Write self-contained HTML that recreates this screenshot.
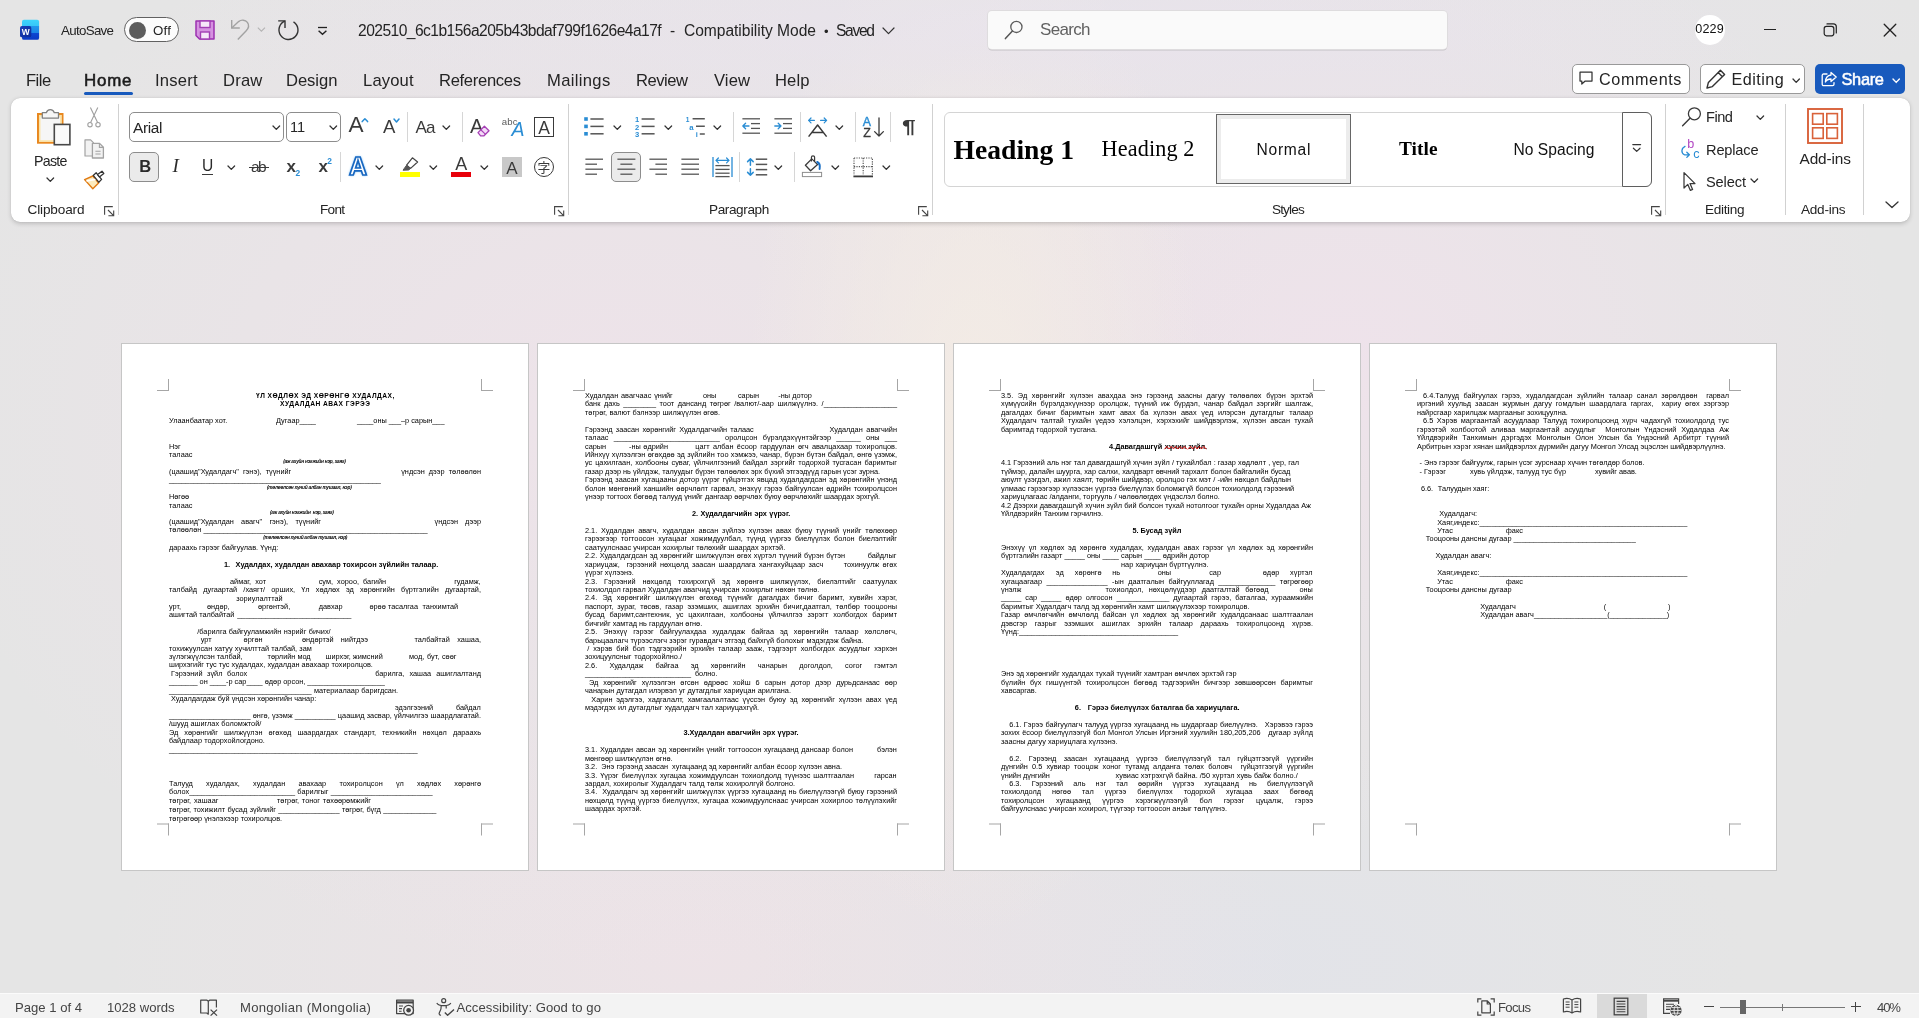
<!DOCTYPE html><html lang="mn"><head><meta charset="utf-8"><title>Word</title><style>
html,body{margin:0;padding:0}
body{width:1919px;height:1018px;position:relative;overflow:hidden;background:#e6e5e6;font-family:"Liberation Sans",sans-serif}
#bg{position:absolute;left:0;top:0;width:1919px;height:1018px;
background:
 radial-gradient(ellipse 900px 110px at 1050px 30px, rgba(233,227,238,.7), rgba(233,227,238,0) 100%),
 radial-gradient(ellipse 230px 520px at 975px 420px, rgba(244,237,228,.9), rgba(244,237,228,0) 100%),
 radial-gradient(ellipse 700px 560px at 620px 420px, rgba(241,226,235,.75), rgba(241,226,235,0) 100%),
 radial-gradient(ellipse 560px 480px at 1340px 360px, rgba(241,226,236,.8), rgba(241,226,236,0) 100%),
 radial-gradient(ellipse 600px 300px at 700px 960px, rgba(240,226,232,.7), rgba(240,226,232,0) 100%),
 radial-gradient(ellipse 500px 220px at 1250px 960px, rgba(224,226,236,.55), rgba(224,226,236,0) 100%),
 #e5e5e5}

.pg{will-change:transform;position:absolute;width:408px;height:528px;background:#fff;box-shadow:inset 0 0 0 1px #c6c6c6;overflow:hidden}
.pc{position:absolute;left:0;top:0;width:816px;height:1056px;transform:scale(.5);transform-origin:0 0;font-family:"Liberation Sans",sans-serif;font-size:14.667px;line-height:16.85px;color:#000}
.s{position:absolute;white-space:pre;display:block}
.j{text-align:justify;text-align-last:justify}
.b{font-weight:bold}
.sm{font-weight:bold;font-style:italic}
.wavy{text-decoration:underline wavy #e8231a 1.6px;text-underline-offset:1px}
.cm{position:absolute;width:22px;height:22px;border:0 solid #a6a6a6}
.cm.tl{left:72px;top:72px;border-right-width:2px;border-bottom-width:2px}
.cm.tr{left:720px;top:72px;border-left-width:2px;border-bottom-width:2px}
.cm.bl{left:72px;top:960.5px;border-right-width:2px;border-top-width:2px}
.cm.br{left:720px;top:960.5px;border-left-width:2px;border-top-width:2px}

.a{position:absolute;display:block;overflow:visible}
.t{position:absolute;white-space:pre;display:block}
#chrome{position:absolute;left:0;top:0;width:1919px;height:1018px;will-change:transform}
</style></head><body><div id="bg"></div><div class="pg" style="left:121px;top:343px"><div class="pc"><i class="cm tl"></i><i class="cm tr"></i><i class="cm bl"></i><i class="cm br"></i><span class="s b ls" style="left:270.0px;top:97.3px;letter-spacing:0.897px;font-size:13.33px;line-height:15.32px;">ҮЛ ХӨДЛӨХ ЭД ХӨРӨНГӨ ХУДАЛДАХ,</span><span class="s b ls" style="left:318.0px;top:113.3px;letter-spacing:0.937px;font-size:13.33px;line-height:15.32px;">ХУДАЛДАН АВАХ ГЭРЭЭ</span><span class="s" style="left:96.0px;top:146.7px;">Улаанбаатар хот.</span><span class="s" style="left:310.0px;top:146.7px;">Дугаар____</span><span class="s" style="left:472.0px;top:146.7px;">____оны ___–р сарын___</span><span class="s" style="left:96.0px;top:197.5px;">Нэг</span><span class="s" style="left:96.0px;top:214.3px;">талаас</span><span class="s sm ls" style="left:324.4px;top:231.0px;letter-spacing:-0.493px;font-size:9.60px;line-height:11.03px;">(аж ахуйн нэгжийн нэр, хаяг)</span><span class="s j" style="left:96.0px;top:248.5px;width:241.0px;">(цаашид"Худалдагч"  гэнэ),  түүнийг</span><span class="s" style="right:96.0px;top:248.5px;">үндсэн  дээр  төлөөлөн</span><span class="s" style="left:96.0px;top:265.3px;">____________________________________________________</span><span class="s sm ls" style="left:292.0px;top:283.4px;letter-spacing:-0.517px;font-size:9.60px;line-height:11.03px;">(төлөөлсөн хүний албан тушаал, нэр)</span><span class="s" style="left:96.0px;top:297.9px;">Нөгөө</span><span class="s" style="left:96.0px;top:315.7px;">талаас</span><span class="s sm ls" style="left:298.0px;top:333.0px;letter-spacing:-0.485px;font-size:9.60px;line-height:11.03px;">(аж ахуйн нэгжийн  нэр, хаяг)</span><span class="s j" style="left:96.0px;top:348.1px;width:304.0px;">(цаашид"Худалдан авагч" гэнэ), түүнийг</span><span class="s j" style="left:627.0px;top:348.1px;width:93.0px;">үндсэн дээр</span><span class="s" style="left:96.0px;top:364.1px;">төлөөлөн</span><span class="s" style="left:164.8px;top:364.1px;">_______________________________________________________</span><span class="s sm ls" style="left:284.4px;top:382.8px;letter-spacing:-0.546px;font-size:9.60px;line-height:11.03px;">(төлөөлсөн хүний албан тушаал, нэр)</span><span class="s" style="left:96.0px;top:400.5px;">дараахь гэрээг байгуулав. Үүнд:</span><span class="s b" style="left:205.8px;top:433.9px;">1.</span><span class="s j b" style="left:229.2px;top:433.9px;width:405.2px;">Худалдах, худалдан авахаар тохирсон зүйлийн талаар.</span><span class="s j" style="left:218.0px;top:467.5px;width:72.0px;">аймаг,  хот</span><span class="s j" style="left:395.4px;top:467.5px;width:133.8px;">сум,  хороо,  багийн</span><span class="s j" style="left:666.4px;top:467.5px;width:53.6px;">гудамж,</span><span class="s j" style="left:96.0px;top:484.3px;width:624.0px;">талбайд дугаартай /хаягт/ орших, Үл хөдлөх эд хөрөнгийн бүртгэлийн дугаартай,</span><span class="s" style="left:230.4px;top:501.7px;">зориулалттай</span><span class="s" style="left:96.0px;top:518.1px;">урт,</span><span class="s" style="left:172.0px;top:518.1px;">өндөр,</span><span class="s" style="left:274.0px;top:518.1px;">өргөнтэй,</span><span class="s" style="left:395.4px;top:518.1px;">давхар</span><span class="s j" style="left:496.8px;top:518.1px;width:177.6px;">өрөө тасалгаа  танхимтай</span><span class="s" style="left:96.0px;top:534.5px;">ашигтай талбайтай</span><span class="s" style="left:232.6px;top:534.5px;">____________________________</span><span class="s j" style="left:152.6px;top:567.7px;width:266.6px;">/барилга байгууламжийн нэрийг бичих/</span><span class="s" style="left:159.4px;top:584.9px;">урт</span><span class="s" style="left:245.2px;top:584.9px;">өргөн</span><span class="s j" style="left:362.0px;top:584.9px;width:132.0px;">өндөртэй  нийтдээ</span><span class="s j" style="left:587.0px;top:584.9px;width:133.0px;">талбайтай  хашаа,</span><span class="s j" style="left:96.0px;top:601.7px;width:285.6px;">тохижуулсан хатуу хучилттай талбай, зам</span><span class="s" style="left:96.0px;top:618.1px;">зүлэгжүүлсэн талбай,</span><span class="s" style="left:293.2px;top:618.1px;">төрлийн мод</span><span class="s" style="left:409.2px;top:618.1px;">ширхэг, жимсний</span><span class="s j" style="left:576.0px;top:618.1px;width:94.8px;">мод, бут, сөөг</span><span class="s j" style="left:96.0px;top:634.5px;width:407.8px;">ширхэгийг тус тус худалдах, худалдан авахаар тохиролцов.</span><span class="s j" style="left:100.0px;top:651.7px;width:152.4px;">Гэрээний  зүйл  болох</span><span class="s j" style="left:508.4px;top:651.7px;width:211.6px;">барилга,  хашаа  ашиглалтанд</span><span class="s j" style="left:96.0px;top:668.5px;width:431.4px;">_______ он ____-р сар____ өдөр орсон, ___________________</span><span class="s j" style="left:96.0px;top:685.7px;width:458.0px;">___________________________________ материалаар баригдсан.</span><span class="s j" style="left:100.0px;top:702.9px;width:290.6px;">Худалдагдаж буй үндсэн хөрөнгийн чанар:</span><span class="s" style="left:548.0px;top:719.5px;">эдэлгээний</span><span class="s j" style="left:670.0px;top:719.5px;width:50.0px;">байдал</span><span class="s j" style="left:96.0px;top:736.1px;width:624.0px;">____________________ өнгө, үзэмж __________ цаашид засвар, үйлчилгээ шаардлагатай.</span><span class="s j" style="left:96.0px;top:752.9px;width:184.6px;">/шууд ашиглах боломжтой/</span><span class="s j" style="left:96.0px;top:769.7px;width:624.0px;">Эд хөрөнгийг шилжүүлэн өгөхөд шаардагдах стандарт, техникийн нөхцөл дараахь</span><span class="s j" style="left:96.0px;top:786.5px;width:191.8px;">байдлаар тодорхойлогдоно.</span><span class="s" style="left:96.0px;top:804.5px;">_____________________________________________________________</span><span class="s j" style="left:96.0px;top:872.1px;width:624.0px;">Талууд худалдах, худалдан авахаар тохиролцсон үл хөдлөх хөрөнгө</span><span class="s j" style="left:96.0px;top:889.3px;width:527.4px;">болох__________________________ барилгыг _________________________</span><span class="s j" style="left:96.0px;top:906.9px;width:98.8px;">төгрөг, хашааг</span><span class="s j" style="left:312.0px;top:906.9px;width:188.0px;">төгрөг, тоног төхөөрөмжийг</span><span class="s j" style="left:96.0px;top:923.7px;width:534.6px;">төгрөг, тохижилт бусад зүйлийг _______________ төгрөг, бүгд _____________</span><span class="s j" style="left:96.0px;top:941.7px;width:225.4px;">төгрөгөөр үнэлэхээр тохиролцов.</span></div></div><div class="pg" style="left:537px;top:343px"><div class="pc"><i class="cm tl"></i><i class="cm tr"></i><i class="cm bl"></i><i class="cm br"></i><span class="s j" style="left:96.0px;top:96.5px;width:175.5px;">Худалдан авагчаас үнийг</span><span class="s" style="left:331.8px;top:96.5px;">оны</span><span class="s" style="left:401.9px;top:96.5px;">сарын</span><span class="s j" style="left:482.4px;top:96.5px;width:67.3px;">-ны дотор</span><span class="s j" style="left:96.0px;top:113.4px;width:624.0px;">банк дахь ________ тоот дансанд төгрөг /валют/-аар шилжүүлнэ. /__________________</span><span class="s j" style="left:96.0px;top:130.2px;width:270.1px;">төгрөг, валют бэлнээр шилжүүлэн өгөв.</span><span class="s j" style="left:96.0px;top:164.0px;width:337.5px;">Гэрээнд заасан хөрөнгийг Худалдагчийн талаас</span><span class="s j" style="left:585.1px;top:164.0px;width:134.9px;">Худалдан авагчийн</span><span class="s j" style="left:96.0px;top:180.8px;width:624.0px;">талаас __________________________ оролцсон бүрэлдэхүүнтэйгээр ______ оны ___</span><span class="s" style="left:96.0px;top:197.7px;">сарын</span><span class="s j" style="left:184.0px;top:197.7px;width:78.0px;">-ны өдрийн</span><span class="s j" style="left:316.5px;top:197.7px;width:403.5px;">цагт албан ёсоор гардуулан өгч авалцахаар тохиролцов.</span><span class="s j" style="left:96.0px;top:214.6px;width:624.0px;">Ийнхүү хүлээлгэн өгөхдөө эд зүйлийн тоо хэмжээ, чанар, бүрэн бүтэн байдал, өнгө үзэмж,</span><span class="s j" style="left:96.0px;top:231.4px;width:624.0px;">ус цахилгаан, холбооны суваг, үйлчилгээний байдал зэргийг тодорхой тусгасан баримтыг</span><span class="s j" style="left:96.0px;top:248.3px;width:590.1px;">газар дээр нь үйлдэж, талуудыг бүрэн төлөөлөх эрх бүхий этгээдүүд гарын үсэг зурна.</span><span class="s j" style="left:96.0px;top:265.2px;width:624.0px;">Гэрээнд заасан хугацааны дотор үүрэг гүйцэтгэх явцад худалдагдсан эд хөрөнгийн үнэнд</span><span class="s j" style="left:96.0px;top:282.0px;width:624.0px;">болон мөнгөний ханшийн өөрчлөлт гарвал, энэхүү гэрээ байгуулсан өдрийн тохиролцсон</span><span class="s j" style="left:96.0px;top:298.9px;width:590.1px;">үнээр тогтоох бөгөөд талууд үнийг дангаар өөрчлөх буюу өөрчлөхийг шаардах эрхгүй.</span><span class="s j b" style="left:309.8px;top:332.6px;width:196.7px;">2. Худалдагчийн эрх үүрэг.</span><span class="s j" style="left:96.0px;top:366.3px;width:624.0px;">2.1. Худалдан авагч, худалдан авсан зүйлээ хүлээн авах буюу түүний үнийг төлөхөөр</span><span class="s j" style="left:96.0px;top:383.2px;width:624.0px;">гэрээгээр тогтоосон хугацааг хожимдуулбал, түүнд үүргээ биелүүлэх болон биелэлтийг</span><span class="s j" style="left:96.0px;top:400.1px;width:400.5px;">саатуулснаас учирсан хохирлыг төлөхийг шаардах эрхтэй.</span><span class="s j" style="left:96.0px;top:416.9px;width:520.3px;">2.2. Худалдагдсан эд хөрөнгийг шилжүүлэн өгөх хүртэл түүний бүрэн бүтэн</span><span class="s j" style="left:661.3px;top:416.9px;width:58.7px;">байдлыг</span><span class="s j" style="left:96.0px;top:433.8px;width:476.7px;">хариуцаж,  гэрээний нөхцөлд заасан шаардлага хангахуйцаар засч</span><span class="s j" style="left:613.5px;top:433.8px;width:106.5px;">тохинуулж өгөх</span><span class="s j" style="left:96.0px;top:450.7px;width:95.8px;">үүрэг хүлээнэ.</span><span class="s j" style="left:96.0px;top:467.5px;width:624.0px;">2.3. Гэрээний нөхцөлд тохирохгүй эд хөрөнгө шилжүүлэх, биелэлтийг саатуулах</span><span class="s j" style="left:96.0px;top:484.4px;width:468.6px;">тохиолдол гарвал Худалдан авагчид учирсан хохирлыг нөхөн төлнө.</span><span class="s j" style="left:96.0px;top:501.3px;width:624.0px;">2.4. Эд хөрөнгийг шилжүүлэн өгөхөд түүнийг дагалдах бичиг баримт, хувийн хэрэг,</span><span class="s j" style="left:96.0px;top:518.1px;width:624.0px;">паспорт, зураг, төсөв, газар эзэмших, ашиглах эрхийн бичиг,даатгал, төлбөр тооцооны</span><span class="s j" style="left:96.0px;top:535.0px;width:624.0px;">бусад баримт,сантехник, ус цахилгаан, холбооны үйлчилгээ зэрэгт холбогдох баримт</span><span class="s j" style="left:96.0px;top:551.9px;width:234.0px;">бичгийг хамтад нь гардуулан өгнө.</span><span class="s j" style="left:96.0px;top:568.7px;width:624.0px;">2.5. Энэхүү гэрээг байгуулахдаа худалдаж байгаа эд хөрөнгийн талаар хөлслөгч,</span><span class="s j" style="left:96.0px;top:585.6px;width:556.5px;">барьцаалагч түрээслэгч зэрэг гуравдагч этгээд байхгүй болохыг мэдэгдэж байна.</span><span class="s j" style="left:100.4px;top:602.5px;width:619.6px;">/ хэрэв бий бол тэдгээрийн эрхийн талаар зааж, тэдгээрт холбогдох асуудлыг хэрхэн</span><span class="s j" style="left:96.0px;top:619.3px;width:194.0px;">зохицуулсныг тодорхойлно./</span><span class="s j" style="left:96.0px;top:636.2px;width:624.0px;">2.6. Худалдаж байгаа эд хөрөнгийн чанарын доголдол, согог гэмтэл</span><span class="s" style="left:96.0px;top:653.1px;">__________________________</span><span class="s" style="left:315.8px;top:653.1px;">болно.</span><span class="s j" style="left:103.9px;top:669.9px;width:616.1px;">Эд хөрөнгийг хүлээлгэн өгсөн өдрөөс хойш 6 сарын дотор дээр дурьдсанаас өөр</span><span class="s j" style="left:96.0px;top:686.8px;width:411.9px;">чанарын дутагдал илэрвэл уг дутагдлыг хариуцан арилгана.</span><span class="s j" style="left:108.5px;top:703.7px;width:611.5px;">Харин эдэлгээ, хадгалалт, хамгаалалтаас үүссэн буюу эд хөрөнгийг хүлээн авах үед</span><span class="s j" style="left:96.0px;top:720.5px;width:348.1px;">мэдэгдэх ил дутагдлыг худалдагч тал хариуцахгүй.</span><span class="s j b" style="left:292.8px;top:771.1px;width:230.3px;">3.Худалдан авагчийн эрх үүрэг.</span><span class="s j" style="left:96.0px;top:804.9px;width:535.9px;">3.1. Худалдан авсан эд хөрөнгийн үнийг тогтоосон хугацаанд дансаар болон</span><span class="s j" style="left:680.1px;top:804.9px;width:39.9px;">бэлэн</span><span class="s j" style="left:96.0px;top:821.7px;width:174.5px;">мөнгөөр шилжүүлэн өгнө.</span><span class="s j" style="left:96.0px;top:838.6px;width:513.9px;">3.2.  Энэ гэрээнд заасан  хугацаанд эд хөрөнгийг албан ёсоор хүлээн авна.</span><span class="s j" style="left:96.0px;top:855.5px;width:538.0px;">3.3. Үүрэг биелүүлэх хугацаа хожимдуулсан тохиолдолд түүнээс шалтгаалан</span><span class="s j" style="left:674.4px;top:855.5px;width:45.6px;">гарсан</span><span class="s j" style="left:96.0px;top:872.3px;width:420.0px;">зардал, хохиролыг Худалдагч талд төлж хохиролгүй болгоно.</span><span class="s j" style="left:96.0px;top:889.2px;width:624.0px;">3.4.  Худалдагч эд хөрөнгийг шилжүүлэх үүргээ хугацаанд нь биелүүлээгүй буюу гэрээний</span><span class="s j" style="left:96.0px;top:906.1px;width:624.0px;">нөхцөлд түүнд үүргээ биелүүлэх, хугацаа хожимдуулснаас учирсан хохирлоо төлүүлэхийг</span><span class="s j" style="left:96.0px;top:922.9px;width:111.7px;">шаардах эрхтэй.</span></div></div><div class="pg" style="left:953px;top:343px"><div class="pc"><i class="cm tl"></i><i class="cm tr"></i><i class="cm bl"></i><i class="cm br"></i><span class="s j" style="left:96.0px;top:96.5px;width:624.0px;">3.5. Эд хөрөнгийг хүлээн авахдаа энэ гэрээнд заасны дагуу төлөөлөх бүрэн эрхтэй</span><span class="s j" style="left:96.0px;top:113.4px;width:624.0px;">хүмүүсийн бүрэлдэхүүнээр оролцож, түүний иж бүрдэл, чанар байдал зэргийг шалгаж,</span><span class="s j" style="left:96.0px;top:130.2px;width:624.0px;">дагалдах бичиг баримтын хамт авах ба хүлээн авах үед илэрсэн дутагдлыг талаар</span><span class="s j" style="left:96.0px;top:147.1px;width:624.0px;">Худалдагч талтай тухайн үедээ хэлэлцэн, хэрхэхийг шийдвэрлэж, хүлээн авсан тухай</span><span class="s j" style="left:96.0px;top:164.0px;width:192.0px;">баримтад тодорхой тусгана.</span><span class="s j b" style="left:312.1px;top:197.7px;width:106.3px;">4.Давагдашгүй</span><span class="s j b" style="left:423.7px;top:197.7px;width:81.5px;">хүчин зүйл.</span><svg style="position:absolute;left:0;top:0;overflow:visible" width="816" height="1056"><polyline points="423.4,211.9 427.8,206.9 432.2,211.9 436.6,206.9 441.0,211.9 445.4,206.9 449.8,211.9 454.2,206.9 458.6,211.9 463.0,206.9 467.4,211.9" fill="none" stroke="#f01010" stroke-width="1.9" stroke-linejoin="round" stroke-linecap="round"/></svg><svg style="position:absolute;left:0;top:0;overflow:visible" width="816" height="1056"><polyline points="470.8,211.9 475.2,206.9 479.6,211.9 484.0,206.9 488.4,211.9 492.8,206.9 497.2,211.9 501.6,206.9 506.0,211.9" fill="none" stroke="#f01010" stroke-width="1.9" stroke-linejoin="round" stroke-linecap="round"/></svg><span class="s j" style="left:96.0px;top:231.4px;width:596.3px;">4.1 Гэрээний аль нэг тал давагдашгүй хүчин зүйл / тухайлбал : газар хөдлөлт , үер, гал</span><span class="s j" style="left:96.0px;top:248.3px;width:578.6px;">түймэр, далайн шуурга, хар салхи, халдварт өвчний тархалт болон байгалийн бусад</span><span class="s j" style="left:96.0px;top:265.2px;width:580.0px;">аюулт үзэгдэл, ажил хаялт, төрийн шийдвэр, оролцоо гэх мэт / -ийн нөхцөл байдлын</span><span class="s j" style="left:96.0px;top:282.0px;width:586.4px;">улмаас гэрээгээр хүлээсэн үүргээ биелүүлэх боломжгүй болсон тохиолдолд гэрээний</span><span class="s j" style="left:96.0px;top:298.9px;width:436.8px;">хариуцлагаас /алданги, торгууль / чөлөөлөгдөх үндэслэл болно.</span><span class="s j" style="left:96.0px;top:315.7px;width:620.0px;">4.2 Дээрхи давагдашгүй хүчин зүйл бий болсон тухай нотолгоог тухайн орны Худалдаа Аж</span><span class="s j" style="left:96.0px;top:332.6px;width:203.6px;">Үйлдвэрийн Танхим гэрчилнэ.</span><span class="s j b" style="left:358.8px;top:366.3px;width:97.8px;">5. Бусад зүйл</span><span class="s j" style="left:96.0px;top:400.1px;width:624.0px;">Энэхүү үл хөдлөх эд хөрөнгө худалдах, худалдан авах гэрээг үл хөдлөх эд хөрөнгийн</span><span class="s j" style="left:96.0px;top:416.9px;width:416.3px;">бүртгэлийн газарт _____ оны ____ сарын ____ өдрийн дотор</span><span class="s j" style="left:336.1px;top:433.8px;width:175.1px;">нар хариуцан бүртгүүлнэ.</span><span class="s" style="left:96.0px;top:450.7px;">Худалдагдах</span><span class="s" style="left:205.7px;top:450.7px;">эд</span><span class="s" style="left:243.7px;top:450.7px;">хөрөнгө</span><span class="s" style="left:318.4px;top:450.7px;">нь</span><span class="s" style="left:409.5px;top:450.7px;">оны</span><span class="s" style="left:512.3px;top:450.7px;">сар</span><span class="s" style="left:619.6px;top:450.7px;">өдөр</span><span class="s j" style="left:674.2px;top:450.7px;width:45.8px;">хүртэл</span><span class="s j" style="left:96.0px;top:467.5px;width:624.0px;">хугацаагаар _______________ -ын даатгалын байгууллагад ______________ төгрөгөөр</span><span class="s" style="left:96.0px;top:484.4px;">үнэлж</span><span class="s j" style="left:305.0px;top:484.4px;width:326.0px;">тохиолдол, нөхцөлүүдээр даатгалтай бөгөөд</span><span class="s j" style="left:693.0px;top:484.4px;width:27.0px;">оны</span><span class="s j" style="left:96.0px;top:501.3px;width:624.0px;">_____ сар _____ өдөр олгосон _____________ дугаартай гэрээ, баталгаа, хураамжийн</span><span class="s j" style="left:96.0px;top:518.1px;width:497.1px;">баримтыг Худалдагч талд эд хөрөнгийн хамт шилжүүлэхээр тохиролцов.</span><span class="s j" style="left:96.0px;top:535.0px;width:624.0px;">Газар өмчлөгчийн өмчлөлд байсан үл хөдлөх эд хөрөнгийг худалдсанаас шалтгаалан</span><span class="s j" style="left:96.0px;top:551.9px;width:624.0px;">дэвсгэр газрыг эзэмших ашиглах эрхийн талаар дараахь тохиролцоонд хүрэв.</span><span class="s" style="left:96.0px;top:568.7px;">Үүнд:_______________________________________</span><span class="s j" style="left:96.0px;top:653.1px;width:471.2px;">Энэ эд хөрөнгийг худалдах тухай түүнийг хамтран өмчлөх эрхтэй гэр</span><span class="s j" style="left:96.0px;top:669.9px;width:624.0px;">бүлийн бүх гишүүнтэй тохиролцсон бөгөөд тэдгээрийн бичгээр зөвшөөрсөн баримтыг</span><span class="s j" style="left:96.0px;top:686.8px;width:70.8px;">хавсаргав.</span><span class="s b" style="left:243.7px;top:720.5px;">6.</span><span class="s j b" style="left:269.5px;top:720.5px;width:303.0px;">Гэрээ биелүүлэх баталгаа ба хариуцлага.</span><span class="s j" style="left:112.5px;top:754.3px;width:607.5px;">6.1. Гэрээ байгуулагч талууд үүргээ хугацаанд нь шударгаар биелүүлнэ.   Хэрэвээ гэрээ</span><span class="s j" style="left:96.0px;top:771.1px;width:624.0px;">зохих ёсоор биелүүлээгүй бол Монгол Улсын Иргэний хуулийн 180,205,206   дугаар зүйлд</span><span class="s j" style="left:96.0px;top:788.0px;width:232.0px;">заасны дагуу хариуцлага хүлээнэ.</span><span class="s j" style="left:112.5px;top:821.7px;width:607.5px;">6.2. Гэрээнд заасан хугацаанд үүргээ биелүүлээгүй тал гүйцэтгээгүй үүргийн</span><span class="s j" style="left:96.0px;top:838.6px;width:624.0px;">дүнгийн 0.5 хувиар тооцож хоног тутамд алданга төлөх боловч  гүйцэтгээгүй үүргийн</span><span class="s j" style="left:96.0px;top:855.5px;width:96.3px;">үнийн дүнгийн</span><span class="s j" style="left:325.2px;top:855.5px;width:364.3px;">хувиас хэтрэхгүй байна. /50 хүртэл хувь байж болно./</span><span class="s j" style="left:112.5px;top:872.3px;width:607.5px;">6.3. Гэрээний аль нэг тал өөрийн үүргээ хугацаанд нь биелүүлээгүй</span><span class="s j" style="left:96.0px;top:889.2px;width:624.0px;">тохиолдолд нөгөө тал үүргээ биелүүлэх тодорхой хугацаа заах бөгөөд</span><span class="s j" style="left:96.0px;top:906.1px;width:624.0px;">тохиролцсон хугацаанд үүргээ хэрэгжүүлээгүй бол гэрээг цуцалж, гэрээ</span><span class="s j" style="left:96.0px;top:922.9px;width:451.7px;">байгуулснаас учирсан хохирол, түүгээр тогтоосон анзыг төлүүлнэ.</span></div></div><div class="pg" style="left:1369px;top:343px"><div class="pc"><i class="cm tl"></i><i class="cm tr"></i><i class="cm bl"></i><i class="cm br"></i><span class="s j" style="left:108.1px;top:96.5px;width:611.9px;">6.4.Талууд байгуулах гэрээ, худалдагдсан зүйлийн талаар санал зөрөлдөөн  гарвал</span><span class="s j" style="left:96.0px;top:113.4px;width:624.0px;">иргэний хуульд заасан журмын дагуу гомдлын шаардлага гаргах,  хариу өгөх зэргээр</span><span class="s j" style="left:96.0px;top:130.2px;width:301.6px;">найрсгаар харилцаж маргааныг зохицуулна.</span><span class="s j" style="left:108.1px;top:147.1px;width:611.9px;">6.5 Хэрэв маргаантай асуудлаар Талууд тохиролцоонд хүрч чадахгүй тохиолдолд тус</span><span class="s j" style="left:96.0px;top:164.0px;width:624.0px;">гэрээтэй холбоотой аливаа маргаантай асуудлыг  Монголын Үндэсний Худалдаа Аж</span><span class="s j" style="left:96.0px;top:180.8px;width:624.0px;">Үйлдвэрийн Танхимын дэргэдэх Монголын Олон Улсын ба Үндэсний Арбитрт түүний</span><span class="s j" style="left:96.0px;top:197.7px;width:617.3px;">Арбитрын хэрэг хянан шийдвэрлэх дүрмийн дагуу Монгол Улсад эцэслэн шийдвэрлүүлнэ.</span><span class="s" style="left:101.0px;top:231.4px;">-</span><span class="s j" style="left:109.8px;top:231.4px;width:440.5px;">Энэ гэрээг байгуулж, гарын үсэг зурснаар хүчин төгөлдөр болов.</span><span class="s" style="left:101.0px;top:248.3px;">-</span><span class="s" style="left:109.8px;top:248.3px;">Гэрээг</span><span class="s j" style="left:202.0px;top:248.3px;width:192.1px;">хувь үйлдэж, талууд тус бүр</span><span class="s j" style="left:451.8px;top:248.3px;width:82.6px;">хувийг авав.</span><span class="s" style="left:103.8px;top:282.0px;">6.6.</span><span class="s j" style="left:137.5px;top:282.0px;width:102.8px;">Талуудын хаяг:</span><span class="s j" style="left:140.7px;top:332.6px;width:76.2px;">Худалдагч:</span><span class="s" style="left:136.4px;top:349.5px;">Хаяг,индекс:___________________________________________________</span><span class="s" style="left:136.4px;top:366.3px;">Утас</span><span class="s" style="left:273.6px;top:366.3px;">факс</span><span class="s" style="left:113.4px;top:383.2px;">Тооцооны дансны дугаар ______________________________</span><span class="s j" style="left:132.9px;top:416.9px;width:111.6px;">Худалдан авагч:</span><span class="s" style="left:136.4px;top:450.7px;">Хаяг,индекс:___________________________________________________</span><span class="s" style="left:136.4px;top:467.5px;">Утас</span><span class="s" style="left:273.6px;top:467.5px;">факс</span><span class="s j" style="left:113.4px;top:484.4px;width:171.9px;">Тооцооны дансны дугаар</span><span class="s j" style="left:222.5px;top:518.1px;width:72.3px;">Худалдагч</span><span class="s" style="left:469.5px;top:518.1px;">(</span><span class="s" style="left:598.1px;top:518.1px;">)</span><span class="s" style="left:222.5px;top:535.0px;">Худалдан авагч__________________(______________)</span></div></div><div id="chrome"><svg class="a" style="left:0.00px;top:0.00px;" width="60" height="60" viewBox="0 0 60 60">
<defs><linearGradient id="wg" x1="0" y1="0" x2="0" y2="1"><stop offset="0" stop-color="#3ed4fc"/><stop offset=".32" stop-color="#36c6f8"/><stop offset=".33" stop-color="#2196ee"/><stop offset=".65" stop-color="#1b86e6"/><stop offset=".66" stop-color="#0d47d2"/><stop offset="1" stop-color="#0a38c4"/></linearGradient>
<linearGradient id="wg2" x1="0" y1="0" x2="1" y2="1"><stop offset="0" stop-color="#1a3fb8"/><stop offset="1" stop-color="#0c2a98"/></linearGradient></defs>
<rect x="22" y="19.7" width="17.1" height="20.1" rx="1.9" fill="url(#wg)"/>
<rect x="20" y="26" width="11.3" height="11.3" rx="1.9" fill="url(#wg2)"/>
<text x="25.65" y="34.6" font-family="Liberation Sans,sans-serif" font-weight="700" font-size="8.4" fill="#fff" text-anchor="middle">W</text></svg><span class="t" style="left:61.00px;top:23.74px;font-size:13.30px;line-height:13.30px;color:#242424;letter-spacing:-0.668px;">AutoSave</span><div class="a" style="left:124.00px;top:17.00px;width:55.00px;height:25.00px;border:1.2px solid #616161;border-radius:13px;background:#fcfcfc;box-sizing:border-box"></div><div class="a" style="left:128.50px;top:21.50px;width:17.00px;height:17.00px;border-radius:50%;background:#5d5d5d"></div><span class="t" style="left:153.00px;top:23.74px;font-size:13.30px;line-height:13.30px;color:#242424;letter-spacing:0.252px;">Off</span><svg class="a" style="left:195.00px;top:20.00px;" width="20" height="20" viewBox="0 0 20 20"><path d="M1 1 H19 V19 H4.5 L1 15.5 Z" fill="#d592e0" stroke="#9c31b0" stroke-width="1.5" stroke-linejoin="round"/>
<rect x="5" y="1" width="10" height="6.5" fill="#f6e6f9" stroke="#a23db4" stroke-width="1.4"/>
<rect x="5.5" y="12" width="9" height="7" fill="#f6e6f9" stroke="#a23db4" stroke-width="1.4"/></svg><svg class="a" style="left:220.00px;top:10.00px;" width="120" height="40" viewBox="220 10 120 40"><g fill="none" stroke-linecap="butt" stroke-linejoin="miter"><path d="M231.7 20 V28 H239.8" stroke="#a2a2a2" stroke-width="1.4"/><path d="M232 27.7 L238.6 21.6 C241.2 19.4 245.4 19.8 247.4 22.4 C249.4 25.2 248.6 28.4 246 31.1 L237.8 39.6" stroke="#a2a2a2" stroke-width="1.4"/><path d="M257.8 27.6 L261.4 31.2 L265 27.6" stroke="#b4b4b4" stroke-width="1.1"/><path d="M278.2 20.9 H285 V27.9" stroke="#333" stroke-width="1.4"/><path d="M284.8 21.2 A9.5 9.5 0 1 0 293.5 21.9" stroke="#333" stroke-width="1.4"/><path d="M318 27.5 H327" stroke="#222" stroke-width="1.3"/><path d="M318.6 30.8 L322.5 34.3 L326.4 30.8" stroke="#222" stroke-width="1.4"/></g></svg><span class="t" style="left:358.00px;top:22.99px;font-size:15.60px;line-height:15.60px;color:#242424;letter-spacing:-0.544px;">202510_6c1b156a205b43bdaf799f1626e4a17f</span><span class="t" style="left:670.00px;top:22.99px;font-size:15.60px;line-height:15.60px;color:#242424;letter-spacing:-0.195px;">-</span><span class="t" style="left:684.00px;top:22.99px;font-size:15.60px;line-height:15.60px;color:#242424;letter-spacing:-0.038px;">Compatibility Mode</span><span class="t" style="left:824.00px;top:25.20px;font-size:13.00px;line-height:13.00px;color:#242424;letter-spacing:-0.051px;">•</span><span class="t" style="left:836.00px;top:22.99px;font-size:15.60px;line-height:15.60px;color:#242424;letter-spacing:-1.308px;">Saved</span><svg class="a" style="left:881.50px;top:26.70px;" width="13" height="7.6" viewBox="0 0 13 7.6"><path d="M1 1 L6.5 6.6 L12 1" fill="none" stroke="#333" stroke-width="1.2" stroke-linecap="round" stroke-linejoin="round"/></svg><div class="a" style="left:988.00px;top:11.00px;width:459.00px;height:38.00px;background:#fafafa;border-radius:4px;box-shadow:0 0 0 1px #dedcde, 0 1.5px 0 0 #c4c2c5"></div><svg class="a" style="left:1004.00px;top:20.00px;" width="20" height="20" viewBox="0 0 20 20"><circle cx="12.4" cy="6.9" r="5.6" fill="none" stroke="#5c5c5c" stroke-width="1.3"/><path d="M8.4 11.0 L1.4 18.6" stroke="#555" stroke-width="1.5" stroke-linecap="round"/></svg><span class="t" style="left:1040.00px;top:20.61px;font-size:17.00px;line-height:17.00px;color:#616161;letter-spacing:-0.673px;">Search</span><div class="a" style="left:1695.00px;top:15.00px;width:30.00px;height:30.00px;background:#fff;border-radius:50%"></div><span class="t" style="left:1695.30px;top:23.33px;font-size:12.60px;line-height:12.60px;color:#111;letter-spacing:0.157px;">0229</span><div class="a" style="left:1764.00px;top:29.00px;width:12.30px;height:1.30px;background:#222"></div><svg class="a" style="left:1823.00px;top:22.00px;" width="16" height="16" viewBox="0 0 16 16"><rect x="1.2" y="4.4" width="9.6" height="9.4" rx="2.2" fill="none" stroke="#222" stroke-width="1.2"/><path d="M4 1.9 H10.4 A2.9 2.9 0 0 1 13.3 4.8 V11" fill="none" stroke="#222" stroke-width="1.2" stroke-linecap="round"/></svg><svg class="a" style="left:1883.00px;top:23.00px;" width="15" height="15" viewBox="0 0 15 15"><path d="M1.2 1.3 L12.8 13 M12.8 1.3 L1.2 13" stroke="#222" stroke-width="1.3" stroke-linecap="round"/></svg><span class="t" style="left:26.00px;top:72.95px;font-size:16.60px;line-height:16.60px;color:#242424;letter-spacing:-0.516px;">File</span><span class="t" style="left:84.00px;top:72.69px;font-size:16.90px;line-height:16.90px;color:#1b1b1b;letter-spacing:0.806px;-webkit-text-stroke:0.55px #1b1b1b;">Home</span><span class="t" style="left:155.00px;top:72.95px;font-size:16.60px;line-height:16.60px;color:#242424;letter-spacing:0.217px;">Insert</span><span class="t" style="left:223.00px;top:72.95px;font-size:16.60px;line-height:16.60px;color:#242424;letter-spacing:0.188px;">Draw</span><span class="t" style="left:286.00px;top:72.95px;font-size:16.60px;line-height:16.60px;color:#242424;letter-spacing:-0.055px;">Design</span><span class="t" style="left:363.00px;top:72.95px;font-size:16.60px;line-height:16.60px;color:#242424;letter-spacing:0.152px;">Layout</span><span class="t" style="left:439.00px;top:72.95px;font-size:16.60px;line-height:16.60px;color:#242424;letter-spacing:-0.321px;">References</span><span class="t" style="left:547.00px;top:72.95px;font-size:16.60px;line-height:16.60px;color:#242424;letter-spacing:0.330px;">Mailings</span><span class="t" style="left:636.00px;top:72.95px;font-size:16.60px;line-height:16.60px;color:#242424;letter-spacing:-0.486px;">Review</span><span class="t" style="left:714.00px;top:72.95px;font-size:16.60px;line-height:16.60px;color:#242424;letter-spacing:0.106px;">View</span><span class="t" style="left:775.00px;top:72.95px;font-size:16.60px;line-height:16.60px;color:#242424;letter-spacing:0.120px;">Help</span><div class="a" style="left:84.00px;top:92.00px;width:49.00px;height:3.00px;background:#185abd;border-radius:1.5px"></div><div class="a" style="left:1572.00px;top:64.00px;width:118.00px;height:30.00px;background:#fff;border:1px solid #999;border-radius:5px;box-sizing:border-box"></div><svg class="a" style="left:1578.00px;top:70.00px;" width="16" height="16" viewBox="0 0 16 16"><path d="M2 2.2 H14 V11 H7.2 L3.8 14 V11 H2 Z" fill="none" stroke="#333" stroke-width="1.25" stroke-linejoin="round"/></svg><span class="t" style="left:1599.00px;top:70.79px;font-size:16.20px;line-height:16.20px;color:#242424;letter-spacing:0.597px;">Comments</span><div class="a" style="left:1700.00px;top:64.00px;width:105.00px;height:30.00px;background:#fff;border:1px solid #999;border-radius:5px;box-sizing:border-box"></div><svg class="a" style="left:1705.00px;top:68.00px;" width="22" height="22" viewBox="0 0 22 22"><path d="M15.4 2.2 L19.6 6.4 L7.4 18.6 L2 20 L3.4 14.4 Z M13.2 4.6 L17.4 8.8" fill="none" stroke="#333" stroke-width="1.4" stroke-linejoin="round"/></svg><span class="t" style="left:1731.50px;top:70.79px;font-size:16.20px;line-height:16.20px;color:#242424;letter-spacing:0.461px;">Editing</span><svg class="a" style="left:1791.80px;top:77.90px;" width="8.4" height="5.4" viewBox="0 0 8.4 5.4"><path d="M1 1 L4.2 4.4 L7.4 1" fill="none" stroke="#333" stroke-width="1.3" stroke-linecap="round" stroke-linejoin="round"/></svg><div class="a" style="left:1815.00px;top:64.00px;width:90.00px;height:30.00px;background:#185abd;border-radius:5px"></div><svg class="a" style="left:1820.00px;top:70.00px;" width="18" height="18" viewBox="0 0 18 18"><path d="M7 4 H3.6 A1.4 1.4 0 0 0 2.2 5.4 V14.2 A1.4 1.4 0 0 0 3.6 15.6 H12.6 A1.4 1.4 0 0 0 14 14.2 V12.6" fill="none" stroke="#fff" stroke-width="1.3" stroke-linecap="round"/><path d="M11 2.4 L16.2 7 L11 11.6 V9 C8 9 6.4 10 5.4 12 C5.6 8 7.6 5.4 11 5 Z" fill="none" stroke="#fff" stroke-width="1.3" stroke-linejoin="round"/></svg><span class="t" style="left:1841.50px;top:70.62px;font-size:16.40px;line-height:16.40px;color:#fff;letter-spacing:-0.316px;-webkit-text-stroke:0.5px #fff;">Share</span><svg class="a" style="left:1892.30px;top:77.90px;" width="8.4" height="5.4" viewBox="0 0 8.4 5.4"><path d="M1 1 L4.2 4.4 L7.4 1" fill="none" stroke="#fff" stroke-width="1.4" stroke-linecap="round" stroke-linejoin="round"/></svg><div class="a" style="left:10.50px;top:98.00px;width:1899.50px;height:123.50px;background:#fff;border-radius:9px;box-shadow:0 1.5px 4px rgba(0,0,0,.17), 0 0 1px rgba(0,0,0,.2)"></div><div class="a" style="left:118.00px;top:104.00px;width:1.00px;height:111.00px;background:#d1d1d1"></div><div class="a" style="left:568.10px;top:104.00px;width:1.00px;height:111.00px;background:#d1d1d1"></div><div class="a" style="left:932.10px;top:104.00px;width:1.00px;height:111.00px;background:#d1d1d1"></div><div class="a" style="left:1665.10px;top:104.00px;width:1.00px;height:111.00px;background:#d1d1d1"></div><div class="a" style="left:1784.90px;top:104.00px;width:1.00px;height:111.00px;background:#d1d1d1"></div><div class="a" style="left:1863.00px;top:104.00px;width:1.00px;height:111.00px;background:#d1d1d1"></div><svg class="a" style="left:30.00px;top:100.00px;" width="90" height="100" viewBox="30 100 90 100">
<rect x="38" y="114" width="24.5" height="28.7" fill="#f6f6f6" stroke="#e8871e" stroke-width="2"/>
<rect x="39.7" y="115.7" width="21.1" height="25.3" fill="none" stroke="#fbe3a4" stroke-width="1.5"/>
<path d="M42.3 118.1 V112.7 H46.4 A4 4 0 0 1 54.2 112.7 H58.5 V118.1 Z" fill="#f6f6f6" stroke="#808080" stroke-width="1.3" stroke-linejoin="round"/>
<rect x="54.3" y="124.4" width="15.6" height="20.3" fill="#fafafa" stroke="#484848" stroke-width="1.6"/>
<g fill="none" stroke="#9f9f9f" stroke-width="1.1"><path d="M90.4 107.4 L97.6 122.6 M97.8 107.4 L90.6 122.6"/><circle cx="90" cy="124.7" r="2.2"/><circle cx="98" cy="124.7" r="2.2"/></g>
<path d="M85 139.9 H90.6 L93.4 142.6 V156 H85 Z" fill="#f2f2f2" stroke="#a2a2a2" stroke-width="1.2" stroke-linejoin="round"/>
<path d="M92.4 143.4 H99.6 L103.4 147.2 V158 H92.4 Z" fill="#f2f2f2" stroke="#a2a2a2" stroke-width="1.3" stroke-linejoin="round"/>
<path d="M99.4 143.6 V147.4 H103.2" fill="none" stroke="#a2a2a2" stroke-width="1.1"/>
<path d="M95.4 151.2 H100.6 M95.4 154 H100.6" stroke="#a2a2a2" stroke-width="1.1"/>
<path d="M92.9 176 L84.6 179.6 L92.8 188.8 L98.6 183 Z" fill="#fdebbd" stroke="#e07a12" stroke-width="1.4" stroke-linejoin="round"/>
<path d="M86.5 181 L95.6 179.4" stroke="#fff" stroke-width="1.6"/>
<path d="M93.2 175.4 L96.2 172.8 L101.6 179.4 L98.8 182.2 Z" fill="#fff" stroke="#333" stroke-width="1.3" stroke-linejoin="round"/>
<path d="M97.6 174.6 L102 171.2 L103.8 173.4 L99.4 176.9 Z" fill="#fff" stroke="#333" stroke-width="1.3" stroke-linejoin="round"/>
</svg><span class="t" style="left:34.00px;top:153.98px;font-size:14.20px;line-height:14.20px;color:#242424;letter-spacing:-0.703px;">Paste</span><svg class="a" style="left:45.90px;top:176.60px;" width="8.6" height="5.4" viewBox="0 0 8.6 5.4"><path d="M1 1 L4.3 4.4 L7.6 1" fill="none" stroke="#333" stroke-width="1.3" stroke-linecap="round" stroke-linejoin="round"/></svg><span class="t" style="left:27.50px;top:202.69px;font-size:13.60px;line-height:13.60px;color:#242424;letter-spacing:-0.152px;">Clipboard</span><svg class="a" style="left:104.00px;top:205.50px;" width="11" height="11" viewBox="0 0 11 11"><path d="M0.6 8.8 V0.6 H8.8" fill="none" stroke="#444" stroke-width="1.1"/><path d="M4 4 L9.6 9.6 M9.7 4.4 V9.7 H4.4" fill="none" stroke="#444" stroke-width="1.1"/></svg><div class="a" style="left:129.00px;top:112.00px;width:154.50px;height:29.50px;border:1px solid #8d8d8d;border-radius:5px;box-sizing:border-box;background:#fff"></div><span class="t" style="left:133.00px;top:119.56px;font-size:15.40px;line-height:15.40px;color:#242424;letter-spacing:-0.327px;">Arial</span><svg class="a" style="left:272.20px;top:124.80px;" width="8.6" height="5.4" viewBox="0 0 8.6 5.4"><path d="M1 1 L4.3 4.4 L7.6 1" fill="none" stroke="#333" stroke-width="1.3" stroke-linecap="round" stroke-linejoin="round"/></svg><div class="a" style="left:286.00px;top:112.00px;width:54.50px;height:29.50px;border:1px solid #8d8d8d;border-radius:5px;box-sizing:border-box;background:#fff"></div><span class="t" style="left:290.00px;top:120.24px;font-size:14.60px;line-height:14.60px;color:#242424;letter-spacing:-0.156px;">11</span><svg class="a" style="left:329.20px;top:124.80px;" width="8.6" height="5.4" viewBox="0 0 8.6 5.4"><path d="M1 1 L4.3 4.4 L7.6 1" fill="none" stroke="#333" stroke-width="1.3" stroke-linecap="round" stroke-linejoin="round"/></svg><span class="t" style="left:348.60px;top:114.47px;font-size:22.60px;line-height:22.60px;color:#3a3a3a;letter-spacing:-0.074px;">A</span><svg class="a" style="left:361.00px;top:117.40px;" width="8" height="6" viewBox="0 0 8 6"><path d="M1.2 4.6 L3.9 1.7 L6.6 4.6" fill="none" stroke="#2a8dd4" stroke-width="1.5" stroke-linecap="round" stroke-linejoin="round"/></svg><span class="t" style="left:383.00px;top:117.86px;font-size:18.60px;line-height:18.60px;color:#3a3a3a;letter-spacing:-0.406px;">A</span><svg class="a" style="left:393.00px;top:117.80px;" width="7" height="5" viewBox="0 0 7 5"><path d="M1 1 L3.5 4 L6 1" fill="none" stroke="#2a8dd4" stroke-width="1.5" stroke-linecap="round" stroke-linejoin="round"/></svg><div class="a" style="left:407.00px;top:112.00px;width:1.00px;height:29.50px;background:#d6d6d6"></div><span class="t" style="left:415.50px;top:119.01px;font-size:17.00px;line-height:17.00px;color:#3a3a3a;letter-spacing:-0.794px;">Aa</span><svg class="a" style="left:442.20px;top:125.10px;" width="8.6" height="5.4" viewBox="0 0 8.6 5.4"><path d="M1 1 L4.3 4.4 L7.6 1" fill="none" stroke="#333" stroke-width="1.3" stroke-linecap="round" stroke-linejoin="round"/></svg><div class="a" style="left:462.10px;top:112.00px;width:1.00px;height:29.50px;background:#d6d6d6"></div><span class="t" style="left:470.00px;top:116.07px;font-size:20.00px;line-height:20.00px;color:#3a3a3a;letter-spacing:-0.340px;">A</span><svg class="a" style="left:476.00px;top:124.00px;" width="15" height="14" viewBox="0 0 15 14"><path d="M2 8.6 L8.4 2.2 L13 6.8 L8 11.8 H4.6 Z" fill="#f4dcf8" stroke="#a73fb6" stroke-width="1.3" stroke-linejoin="round"/><path d="M5 6 L9.6 10.4" stroke="#a73fb6" stroke-width="1.1"/></svg><span class="t" style="left:501.80px;top:116.87px;font-size:9.60px;line-height:9.60px;color:#5a5a5a;letter-spacing:0.161px;">abc</span><span class="t" style="left:511.50px;top:120.49px;font-size:19.50px;line-height:19.50px;color:#2a8dd4;letter-spacing:-0.507px;font-style:italic;">A</span><div class="a" style="left:534.00px;top:117.00px;width:20.00px;height:20.00px;border:1.6px solid #3a3a3a;box-sizing:border-box"></div><span class="t" style="left:538.20px;top:119.59px;font-size:17.50px;line-height:17.50px;color:#3a3a3a;letter-spacing:-0.073px;">A</span><div class="a" style="left:129.00px;top:152.00px;width:29.50px;height:29.50px;border:1px solid #8d8d8d;border-radius:5px;box-sizing:border-box;background:#ebebeb"></div><span class="t" style="left:139.30px;top:158.03px;font-size:16.50px;line-height:16.50px;color:#2b2b2b;letter-spacing:-2.216px;font-weight:700;">B</span><span class="t" style="left:172.40px;top:156.09px;font-size:19.00px;line-height:19.00px;color:#2b2b2b;letter-spacing:1.673px;font-style:italic;font-family:'Liberation Serif',serif;">I</span><span class="t" style="left:202.00px;top:157.79px;font-size:15.60px;line-height:15.60px;color:#2b2b2b;letter-spacing:-0.966px;">U</span><div class="a" style="left:201.50px;top:173.60px;width:11.50px;height:1.10px;background:#3a3a3a"></div><svg class="a" style="left:226.70px;top:165.10px;" width="8.6" height="5.4" viewBox="0 0 8.6 5.4"><path d="M1 1 L4.3 4.4 L7.6 1" fill="none" stroke="#333" stroke-width="1.3" stroke-linecap="round" stroke-linejoin="round"/></svg><span class="t" style="left:251.00px;top:159.38px;font-size:15.50px;line-height:15.50px;color:#3a3a3a;letter-spacing:-1.741px;">ab</span><div class="a" style="left:249.00px;top:167.20px;width:19.50px;height:1.10px;background:#3a3a3a"></div><span class="t" style="left:286.50px;top:158.11px;font-size:17.00px;line-height:17.00px;color:#3a3a3a;letter-spacing:-1.455px;font-weight:700;">x</span><span class="t" style="left:295.50px;top:169.49px;font-size:8.40px;line-height:8.40px;color:#2a8dd4;letter-spacing:0.128px;font-weight:700;">2</span><span class="t" style="left:318.50px;top:158.11px;font-size:17.00px;line-height:17.00px;color:#3a3a3a;letter-spacing:-1.455px;font-weight:700;">x</span><span class="t" style="left:327.20px;top:156.69px;font-size:8.40px;line-height:8.40px;color:#2a8dd4;letter-spacing:0.328px;font-weight:700;">2</span><div class="a" style="left:340.00px;top:152.00px;width:1.00px;height:29.50px;background:#d6d6d6"></div><span class="t" style="left:349.00px;top:154.44px;font-size:25.00px;line-height:25.00px;color:#fff;letter-spacing:-0.054px;font-weight:700;-webkit-text-stroke:1.7px #1867c0;text-shadow:0 0 2px #3d9be9,0 0 3px #6db6f0;">A</span><svg class="a" style="left:375.20px;top:165.10px;" width="8.6" height="5.4" viewBox="0 0 8.6 5.4"><path d="M1 1 L4.3 4.4 L7.6 1" fill="none" stroke="#333" stroke-width="1.3" stroke-linecap="round" stroke-linejoin="round"/></svg><svg class="a" style="left:400.00px;top:156.00px;" width="20" height="16" viewBox="0 0 20 16"><path d="M12.4 1.8 L17.6 6 L10.6 12.4 L6.6 9.2 Z" fill="#fff" stroke="#444" stroke-width="1.2" stroke-linejoin="round"/><path d="M6.6 9.2 L10.6 12.4 L8.6 14 L3 14.2 Z" fill="#555" stroke="#555" stroke-width="1" stroke-linejoin="round"/></svg><div class="a" style="left:400.00px;top:172.20px;width:20.00px;height:5.00px;background:#ffff00"></div><svg class="a" style="left:428.70px;top:165.10px;" width="8.6" height="5.4" viewBox="0 0 8.6 5.4"><path d="M1 1 L4.3 4.4 L7.6 1" fill="none" stroke="#333" stroke-width="1.3" stroke-linecap="round" stroke-linejoin="round"/></svg><span class="t" style="left:455.20px;top:155.16px;font-size:18.00px;line-height:18.00px;color:#3a3a3a;letter-spacing:0.194px;">A</span><div class="a" style="left:451.00px;top:172.20px;width:20.00px;height:5.00px;background:#e8000a"></div><svg class="a" style="left:480.20px;top:165.10px;" width="8.6" height="5.4" viewBox="0 0 8.6 5.4"><path d="M1 1 L4.3 4.4 L7.6 1" fill="none" stroke="#333" stroke-width="1.3" stroke-linecap="round" stroke-linejoin="round"/></svg><div class="a" style="left:502.00px;top:157.00px;width:20.00px;height:20.00px;background:#c8c8c8"></div><span class="t" style="left:506.30px;top:159.61px;font-size:17.00px;line-height:17.00px;color:#3a3a3a;letter-spacing:0.061px;">A</span><div class="a" style="left:534.00px;top:157.00px;width:20.00px;height:20.00px;border:1.3px solid #3a3a3a;border-radius:50%;box-sizing:border-box"></div><span class="t" style="left:537.60px;top:161.46px;font-size:12.80px;line-height:12.80px;color:#3a3a3a;font-family:'Noto Sans CJK JP','Noto Sans CJK SC',sans-serif;">字</span><span class="t" style="left:320.00px;top:202.69px;font-size:13.60px;line-height:13.60px;color:#242424;letter-spacing:-0.738px;">Font</span><svg class="a" style="left:554.00px;top:205.50px;" width="11" height="11" viewBox="0 0 11 11"><path d="M0.6 8.8 V0.6 H8.8" fill="none" stroke="#444" stroke-width="1.1"/><path d="M4 4 L9.6 9.6 M9.7 4.4 V9.7 H4.4" fill="none" stroke="#444" stroke-width="1.1"/></svg><svg class="a" style="left:584.00px;top:117.00px;" width="20" height="20" viewBox="0 0 20 20"><rect x="0.2" y="0.2" width="3.6" height="3.6" fill="#2a8dd4"/><rect x="0.2" y="7.6" width="3.6" height="3.6" fill="#2a8dd4"/><rect x="0.2" y="15" width="3.6" height="3.6" fill="#2a8dd4"/><path d="M6.4 2 H19.6" stroke="#555" stroke-width="1.5"/><path d="M6.4 9.4 H19.6" stroke="#555" stroke-width="1.5"/><path d="M6.4 16.8 H19.6" stroke="#555" stroke-width="1.5"/></svg><svg class="a" style="left:612.70px;top:125.10px;" width="8.6" height="5.4" viewBox="0 0 8.6 5.4"><path d="M1 1 L4.3 4.4 L7.6 1" fill="none" stroke="#333" stroke-width="1.3" stroke-linecap="round" stroke-linejoin="round"/></svg><svg class="a" style="left:635.20px;top:116.00px;" width="20" height="22" viewBox="0 0 20 22"><text x="0" y="6.2" font-family="Liberation Sans,sans-serif" font-weight="700" font-size="7.6" fill="#2a8dd4">1</text><text x="0" y="13.7" font-family="Liberation Sans,sans-serif" font-weight="700" font-size="7.6" fill="#2a8dd4">2</text><text x="0" y="21.2" font-family="Liberation Sans,sans-serif" font-weight="700" font-size="7.6" fill="#2a8dd4">3</text><path d="M6.6 3 H19.6" stroke="#555" stroke-width="1.5"/><path d="M6.6 10.4 H19.6" stroke="#555" stroke-width="1.5"/><path d="M6.6 17.8 H19.6" stroke="#555" stroke-width="1.5"/></svg><svg class="a" style="left:664.20px;top:125.10px;" width="8.6" height="5.4" viewBox="0 0 8.6 5.4"><path d="M1 1 L4.3 4.4 L7.6 1" fill="none" stroke="#333" stroke-width="1.3" stroke-linecap="round" stroke-linejoin="round"/></svg><svg class="a" style="left:680.00px;top:110.00px;" width="30" height="30" viewBox="680 110 30 30"><g font-family="Liberation Sans,sans-serif" font-weight="700" fill="#2a8dd4"><text x="685.8" y="121.8" font-size="6.6">1</text><text x="689.2" y="129.7" font-size="7.8">a</text><text x="695.8" y="136.8" font-size="7.4">i</text></g><path d="M692.6 118.8 H704.8 M696 126.3 H704.8 M699.8 134 H704.8" stroke="#555" stroke-width="1.5"/></svg><svg class="a" style="left:713.20px;top:125.10px;" width="8.6" height="5.4" viewBox="0 0 8.6 5.4"><path d="M1 1 L4.3 4.4 L7.6 1" fill="none" stroke="#333" stroke-width="1.3" stroke-linecap="round" stroke-linejoin="round"/></svg><div class="a" style="left:733.00px;top:112.00px;width:1.00px;height:29.50px;background:#d6d6d6"></div><svg class="a" style="left:742.00px;top:117.00px;" width="19" height="19" viewBox="0 0 19 19"><path d="M0.4 1.8 H18" stroke="#555" stroke-width="1.3"/><path d="M9 6.6 H18" stroke="#555" stroke-width="1.3"/><path d="M9 11.4 H18" stroke="#555" stroke-width="1.3"/><path d="M0.4 16.2 H18" stroke="#555" stroke-width="1.3"/><path d="M7 9 H0.8 M3.6 6.2 L0.8 9 L3.6 11.8" fill="none" stroke="#2a8dd4" stroke-width="1.3" stroke-linecap="round" stroke-linejoin="round"/></svg><svg class="a" style="left:774.00px;top:117.00px;" width="19" height="19" viewBox="0 0 19 19"><path d="M0.4 1.8 H18" stroke="#555" stroke-width="1.3"/><path d="M9 6.6 H18" stroke="#555" stroke-width="1.3"/><path d="M9 11.4 H18" stroke="#555" stroke-width="1.3"/><path d="M0.4 16.2 H18" stroke="#555" stroke-width="1.3"/><path d="M0.8 9 H7 M4.2 6.2 L7 9 L4.2 11.8" fill="none" stroke="#2a8dd4" stroke-width="1.3" stroke-linecap="round" stroke-linejoin="round"/></svg><div class="a" style="left:800.00px;top:112.00px;width:1.00px;height:29.50px;background:#d6d6d6"></div><svg class="a" style="left:807.00px;top:116.00px;" width="22" height="22" viewBox="0 0 22 22"><path d="M1.6 20.6 L10.6 9 L19.6 20.6 M4.6 16.6 H16.6" fill="none" stroke="#3a3a3a" stroke-width="1.5" stroke-linejoin="round"/><path d="M1.6 4.4 H7.4 M4 2 L1.6 4.4 L4 6.8 M13.6 4.4 H19.6 M17.2 2 L19.6 4.4 L17.2 6.8" fill="none" stroke="#2a8dd4" stroke-width="1.2" stroke-linecap="round" stroke-linejoin="round"/></svg><svg class="a" style="left:835.20px;top:125.10px;" width="8.6" height="5.4" viewBox="0 0 8.6 5.4"><path d="M1 1 L4.3 4.4 L7.6 1" fill="none" stroke="#333" stroke-width="1.3" stroke-linecap="round" stroke-linejoin="round"/></svg><div class="a" style="left:855.00px;top:112.00px;width:1.00px;height:29.50px;background:#d6d6d6"></div><span class="t" style="left:862.80px;top:115.70px;font-size:12.40px;line-height:12.40px;color:#2a8dd4;letter-spacing:0.529px;-webkit-text-stroke:0.4px #2a8dd4;">A</span><span class="t" style="left:863.20px;top:126.50px;font-size:12.40px;line-height:12.40px;color:#3a3a3a;letter-spacing:0.226px;-webkit-text-stroke:0.3px #3a3a3a;">Z</span><svg class="a" style="left:872.80px;top:117.00px;" width="12" height="21" viewBox="0 0 12 21"><path d="M6 1 V19 M1.6 14.6 L6 19 L10.4 14.6" fill="none" stroke="#3a3a3a" stroke-width="1.3" stroke-linecap="round" stroke-linejoin="round"/></svg><div class="a" style="left:890.10px;top:112.00px;width:1.00px;height:29.50px;background:#d6d6d6"></div><span class="t" style="left:901.50px;top:117.12px;font-size:19.00px;line-height:19.00px;color:#3a3a3a;font-weight:700;transform:scaleX(1.3);transform-origin:0 0;">¶</span><svg class="a" style="left:585.00px;top:158.00px;" width="19" height="18" viewBox="0 0 19 18"><path d="M0.4 1.2 H18" stroke="#555" stroke-width="1.3"/><path d="M0.4 6.2 H12" stroke="#555" stroke-width="1.3"/><path d="M0.4 11.2 H18" stroke="#555" stroke-width="1.3"/><path d="M0.4 16.2 H12" stroke="#555" stroke-width="1.3"/></svg><div class="a" style="left:611.00px;top:152.00px;width:30.00px;height:29.50px;border:1px solid #8d8d8d;border-radius:5px;box-sizing:border-box;background:#ebebeb"></div><svg class="a" style="left:616.60px;top:158.00px;" width="19" height="18" viewBox="0 0 19 18"><path d="M0.4 1.2 H18.4" stroke="#555" stroke-width="1.3"/><path d="M3.4 6.2 H15.4" stroke="#555" stroke-width="1.3"/><path d="M0.4 11.2 H18.4" stroke="#555" stroke-width="1.3"/><path d="M3.4 16.2 H15.4" stroke="#555" stroke-width="1.3"/></svg><svg class="a" style="left:649.00px;top:158.00px;" width="19" height="18" viewBox="0 0 19 18"><path d="M0.4 1.2 H18" stroke="#555" stroke-width="1.3"/><path d="M6.4 6.2 H18" stroke="#555" stroke-width="1.3"/><path d="M0.4 11.2 H18" stroke="#555" stroke-width="1.3"/><path d="M6.4 16.2 H18" stroke="#555" stroke-width="1.3"/></svg><svg class="a" style="left:681.00px;top:158.00px;" width="19" height="18" viewBox="0 0 19 18"><path d="M0.4 1.2 H18" stroke="#555" stroke-width="1.3"/><path d="M0.4 6.2 H18" stroke="#555" stroke-width="1.3"/><path d="M0.4 11.2 H18" stroke="#555" stroke-width="1.3"/><path d="M0.4 16.2 H18" stroke="#555" stroke-width="1.3"/></svg><svg class="a" style="left:711.50px;top:156.00px;" width="21" height="22" viewBox="0 0 21 22"><path d="M1 1 V21 M20 1 V21" stroke="#2a8dd4" stroke-width="1.3"/><path d="M4 4.4 H17 M6.4 2 L4 4.4 L6.4 6.8 M14.6 2 L17 4.4 L14.6 6.8" fill="none" stroke="#2a8dd4" stroke-width="1.2" stroke-linecap="round" stroke-linejoin="round"/><path d="M3.4 9.6 H17.6" stroke="#555" stroke-width="1.3"/><path d="M3.4 13.4 H17.6" stroke="#555" stroke-width="1.3"/><path d="M3.4 17.2 H17.6" stroke="#555" stroke-width="1.3"/><path d="M3.4 20.6 H17.6" stroke="#555" stroke-width="1.3"/></svg><div class="a" style="left:739.00px;top:152.00px;width:1.00px;height:29.50px;background:#d6d6d6"></div><svg class="a" style="left:745.80px;top:157.00px;" width="23" height="20" viewBox="0 0 23 20"><path d="M4.4 8.2 V1.8 M1.6 4.6 L4.4 1.8 L7.2 4.6 M4.4 11.8 V18.2 M1.6 15.4 L4.4 18.2 L7.2 15.4" fill="none" stroke="#2a8dd4" stroke-width="1.5" stroke-linecap="round" stroke-linejoin="round"/><path d="M9.8 2.2 H21.2" stroke="#555" stroke-width="1.5"/><path d="M9.8 7.4 H21.2" stroke="#555" stroke-width="1.5"/><path d="M9.8 12.6 H21.2" stroke="#555" stroke-width="1.5"/><path d="M9.8 17.8 H21.2" stroke="#555" stroke-width="1.5"/></svg><svg class="a" style="left:774.20px;top:165.10px;" width="8.6" height="5.4" viewBox="0 0 8.6 5.4"><path d="M1 1 L4.3 4.4 L7.6 1" fill="none" stroke="#333" stroke-width="1.3" stroke-linecap="round" stroke-linejoin="round"/></svg><div class="a" style="left:794.00px;top:152.00px;width:1.00px;height:29.50px;background:#d6d6d6"></div><svg class="a" style="left:800.00px;top:154.00px;" width="24" height="26" viewBox="800 154 24 26"><path d="M805.4 165.3 L811.8 158.9 L817.6 164.6 L810.6 170.8 Z" fill="#fafafa" stroke="#3a3a3a" stroke-width="1.3" stroke-linejoin="round"/><path d="M811.4 161.4 V157.4 A1.6 1.6 0 0 1 814.6 157.4 V161.8" fill="none" stroke="#3a3a3a" stroke-width="1.2"/><path d="M817.2 162 C819.6 163.2 820.2 166 819.6 169" fill="none" stroke="#1a6fc4" stroke-width="2" stroke-linecap="round"/><rect x="802.4" y="172.4" width="19.2" height="4.2" fill="#fff" stroke="#8e8e8e" stroke-width="1"/></svg><svg class="a" style="left:831.20px;top:165.10px;" width="8.6" height="5.4" viewBox="0 0 8.6 5.4"><path d="M1 1 L4.3 4.4 L7.6 1" fill="none" stroke="#333" stroke-width="1.3" stroke-linecap="round" stroke-linejoin="round"/></svg><svg class="a" style="left:852.50px;top:156.50px;" width="21" height="21" viewBox="0 0 21 21"><path d="M1 1 H19.4 V18 M1 1 V18 M10.2 1 V18 M1 9.6 H19.4" fill="none" stroke="#555" stroke-width="1.2" stroke-dasharray="1.2 1.2"/><path d="M0.4 19.4 H20" stroke="#3a3a3a" stroke-width="1.8"/></svg><svg class="a" style="left:882.20px;top:165.10px;" width="8.6" height="5.4" viewBox="0 0 8.6 5.4"><path d="M1 1 L4.3 4.4 L7.6 1" fill="none" stroke="#333" stroke-width="1.3" stroke-linecap="round" stroke-linejoin="round"/></svg><span class="t" style="left:709.00px;top:202.69px;font-size:13.60px;line-height:13.60px;color:#242424;letter-spacing:-0.401px;">Paragraph</span><svg class="a" style="left:918.00px;top:205.50px;" width="11" height="11" viewBox="0 0 11 11"><path d="M0.6 8.8 V0.6 H8.8" fill="none" stroke="#444" stroke-width="1.1"/><path d="M4 4 L9.6 9.6 M9.7 4.4 V9.7 H4.4" fill="none" stroke="#444" stroke-width="1.1"/></svg><div class="a" style="left:944.00px;top:112.00px;width:708.00px;height:75.00px;border:1px solid #d4d4d4;border-radius:6px;box-sizing:border-box;background:#fff"></div><span class="t" style="left:953.50px;top:135.69px;font-size:27.60px;line-height:27.60px;color:#000;letter-spacing:0.014px;font-weight:700;font-family:'Liberation Serif',serif;">Heading 1</span><span class="t" style="left:1101.50px;top:137.71px;font-size:22.20px;line-height:22.20px;color:#000;letter-spacing:0.143px;font-family:'Liberation Serif',serif;">Heading 2</span><div class="a" style="left:1216.00px;top:114.00px;width:134.80px;height:69.60px;border:1.2px solid #666;box-sizing:border-box;background:#fff;box-shadow:inset 0 0 0 4px #ececec"></div><span class="t" style="left:1256.50px;top:142.29px;font-size:15.60px;line-height:15.60px;color:#111;letter-spacing:0.745px;">Normal</span><span class="t" style="left:1399.00px;top:138.54px;font-size:19.30px;line-height:19.30px;color:#000;letter-spacing:0.064px;font-weight:700;font-family:'Liberation Serif',serif;">Title</span><span class="t" style="left:1513.40px;top:141.99px;font-size:15.60px;line-height:15.60px;color:#111;letter-spacing:0.050px;">No Spacing</span><div class="a" style="left:1622.00px;top:112.00px;width:30.00px;height:75.00px;border:1px solid #5f5f5f;border-radius:0 6px 6px 0;box-sizing:border-box;background:#fff"></div><svg class="a" style="left:1631.00px;top:142.00px;" width="12" height="12" viewBox="0 0 12 12"><path d="M1.8 2.6 H9.6" stroke="#333" stroke-width="1.2" stroke-linecap="round"/><path d="M2.4 6.2 L5.7 9.4 L9 6.2" fill="none" stroke="#333" stroke-width="1.2" stroke-linecap="round" stroke-linejoin="round"/></svg><span class="t" style="left:1272.00px;top:202.69px;font-size:13.60px;line-height:13.60px;color:#242424;letter-spacing:-0.867px;">Styles</span><svg class="a" style="left:1651.00px;top:205.50px;" width="11" height="11" viewBox="0 0 11 11"><path d="M0.6 8.8 V0.6 H8.8" fill="none" stroke="#444" stroke-width="1.1"/><path d="M4 4 L9.6 9.6 M9.7 4.4 V9.7 H4.4" fill="none" stroke="#444" stroke-width="1.1"/></svg><svg class="a" style="left:1681.00px;top:106.00px;" width="22" height="22" viewBox="0 0 22 22"><circle cx="13.4" cy="7.8" r="6" fill="none" stroke="#3a3a3a" stroke-width="1.3"/><path d="M9 12.2 L1.6 19.8" stroke="#3a3a3a" stroke-width="1.4" stroke-linecap="round"/></svg><span class="t" style="left:1706.00px;top:110.44px;font-size:14.60px;line-height:14.60px;color:#242424;letter-spacing:-0.467px;">Find</span><svg class="a" style="left:1756.20px;top:115.30px;" width="8.6" height="5.4" viewBox="0 0 8.6 5.4"><path d="M1 1 L4.3 4.4 L7.6 1" fill="none" stroke="#333" stroke-width="1.3" stroke-linecap="round" stroke-linejoin="round"/></svg><span class="t" style="left:1687.30px;top:137.93px;font-size:12.60px;line-height:12.60px;color:#b146c2;">b</span><span class="t" style="left:1693.20px;top:148.33px;font-size:12.60px;line-height:12.60px;color:#2a8dd4;">c</span><svg class="a" style="left:1680.00px;top:145.00px;" width="12" height="14" viewBox="0 0 12 14"><path d="M5.0 1.4 C1.2 3.4 0.8 7.8 4.4 9.8 H9.4 M6.8 7.2 L9.4 9.8 L6.8 12.4" fill="none" stroke="#2a8dd4" stroke-width="1.3" stroke-linecap="round" stroke-linejoin="round"/></svg><span class="t" style="left:1706.00px;top:142.64px;font-size:14.60px;line-height:14.60px;color:#242424;letter-spacing:-0.161px;">Replace</span><svg class="a" style="left:1682.00px;top:171.00px;" width="15" height="21" viewBox="0 0 15 21"><path d="M2 1.6 V17 L5.8 13.4 L8.4 19.4 L10.6 18.4 L8 12.6 H13 Z" fill="#fff" stroke="#3a3a3a" stroke-width="1.25" stroke-linejoin="round"/></svg><span class="t" style="left:1706.00px;top:174.54px;font-size:14.60px;line-height:14.60px;color:#242424;letter-spacing:-0.116px;">Select</span><svg class="a" style="left:1750.20px;top:178.30px;" width="8.6" height="5.4" viewBox="0 0 8.6 5.4"><path d="M1 1 L4.3 4.4 L7.6 1" fill="none" stroke="#333" stroke-width="1.3" stroke-linecap="round" stroke-linejoin="round"/></svg><span class="t" style="left:1705.00px;top:202.69px;font-size:13.60px;line-height:13.60px;color:#242424;letter-spacing:-0.331px;">Editing</span><svg class="a" style="left:1807.00px;top:108.00px;" width="36" height="36" viewBox="0 0 36 36"><rect x="1" y="1" width="34" height="34" fill="none" stroke="#d9623a" stroke-width="1.9"/><rect x="5.6" y="5.6" width="10.6" height="10.6" fill="#fff" stroke="#d9623a" stroke-width="1.6"/><rect x="5.6" y="19.8" width="10.6" height="10.6" fill="#fff" stroke="#d9623a" stroke-width="1.6"/><rect x="19.8" y="5.6" width="10.6" height="10.6" fill="#fff" stroke="#d9623a" stroke-width="1.6"/><rect x="19.8" y="19.8" width="10.6" height="10.6" fill="#fff" stroke="#d9623a" stroke-width="1.6"/></svg><span class="t" style="left:1799.50px;top:150.56px;font-size:15.40px;line-height:15.40px;color:#242424;letter-spacing:-0.119px;">Add-ins</span><span class="t" style="left:1801.00px;top:202.69px;font-size:13.60px;line-height:13.60px;color:#242424;letter-spacing:-0.252px;">Add-ins</span><svg class="a" style="left:1885.00px;top:201.10px;" width="14" height="7.6" viewBox="0 0 14 7.6"><path d="M1 1 L7 6.6 L13 1" fill="none" stroke="#333" stroke-width="1.3" stroke-linecap="round" stroke-linejoin="round"/></svg><div class="a" style="left:0.00px;top:993.00px;width:1919.00px;height:25.00px;background:#f3f3f3;border-top:1px solid #fbfbfb;box-sizing:border-box"></div><span class="t" style="left:15.00px;top:1001.11px;font-size:13.10px;line-height:13.10px;color:#444;letter-spacing:-0.001px;">Page 1 of 4</span><span class="t" style="left:107.00px;top:1001.11px;font-size:13.10px;line-height:13.10px;color:#444;letter-spacing:-0.014px;">1028 words</span><svg class="a" style="left:190.00px;top:993.00px;" width="280" height="25" viewBox="190 993 280 25"><g fill="none" stroke="#444" stroke-width="1.2" stroke-linejoin="round"><path d="M208.3 1001.2 L207 1000.2 H200.7 V1013 H206.8 L208.3 1014.2 Z"/><path d="M208.3 1001.2 L209.6 1000.2 H216.4 V1007.6"/><path d="M210.6 1009.6 L217 1015.6 M217 1009.6 L210.6 1015.6" stroke-width="1.3"/><rect x="396.6" y="1000.2" width="16.6" height="13.4"/><path d="M396.6 1002.4 H413.2" stroke-width="2.2"/><path d="M399 1006 H403 M399 1008.6 H402 M399 1011.2 H401.6" stroke-width="1.1"/><circle cx="408.6" cy="1010.3" r="4.9" fill="#f3f3f3" stroke-width="1.3"/><circle cx="408.6" cy="1010.3" r="2.3" fill="#444" stroke="none"/><circle cx="443.7" cy="1000.7" r="2" /><path d="M436.8 1003 C438 1005.4 441 1005.6 443.7 1005.6 C446.4 1005.6 449.6 1005.4 450.8 1003 M441.2 1005.6 C441.6 1009 440.4 1011 439.4 1012.6 C438.6 1014 439.6 1015.4 441 1015 M446.2 1005.6 V1008.4"/><path d="M444.8 1012.6 L447.6 1015.2 L454 1009.4" stroke-width="1.4"/></g></svg><span class="t" style="left:240.00px;top:1001.11px;font-size:13.10px;line-height:13.10px;color:#444;letter-spacing:0.265px;">Mongolian (Mongolia)</span><span class="t" style="left:456.50px;top:1001.11px;font-size:13.10px;line-height:13.10px;color:#444;letter-spacing:0.044px;">Accessibility: Good to go</span><svg class="a" style="left:1476.00px;top:997.00px;" width="20" height="20" viewBox="0 0 20 20"><path d="M1.8 5.4 V1.8 H5.4 M14.6 1.8 H18.2 V5.4 M18.2 14.6 V18.2 H14.6 M5.4 18.2 H1.8 V14.6" fill="none" stroke="#444" stroke-width="1.2"/><path d="M5.8 3.8 H11.4 L14.4 6.8 V15.8 H5.8 Z M11.2 4 V7 H14.2" fill="none" stroke="#444" stroke-width="1.2" stroke-linejoin="round"/></svg><span class="t" style="left:1498.00px;top:1001.11px;font-size:13.10px;line-height:13.10px;color:#444;letter-spacing:-0.668px;">Focus</span><svg class="a" style="left:1562.00px;top:997.00px;" width="20" height="18" viewBox="0 0 20 18"><path d="M10 3 C7.6 1.4 4 1.2 1.4 2 V15 C4 14.2 7.6 14.4 10 16 C12.4 14.4 16 14.2 18.6 15 V2 C16 1.2 12.4 1.4 10 3 Z M10 3 V16" fill="none" stroke="#444" stroke-width="1.2" stroke-linejoin="round"/><path d="M3.6 5 H7.6 M3.6 7.6 H7.6 M3.6 10.2 H7.6 M12.4 5 H16.4 M12.4 7.6 H16.4 M12.4 10.2 H16.4" stroke="#444" stroke-width="1"/></svg><div class="a" style="left:1597.00px;top:994.00px;width:49.50px;height:24.00px;background:#dadada"></div><svg class="a" style="left:1613.00px;top:997.00px;" width="16" height="19" viewBox="0 0 16 19"><rect x="1.2" y="1.2" width="13.6" height="16.6" fill="none" stroke="#444" stroke-width="1.3"/><path d="M3.6 4.4 H12.4 M3.6 7 H12.4 M3.6 9.6 H12.4 M3.6 12.2 H12.4 M3.6 14.8 H12.4" stroke="#444" stroke-width="1.1"/></svg><svg class="a" style="left:1661.00px;top:997.00px;" width="22" height="21" viewBox="0 0 22 21"><path d="M17.6 7 V1.8 H2.6 V16.4 H9" fill="none" stroke="#444" stroke-width="1.2"/><path d="M2.6 3.8 H17.6" stroke="#444" stroke-width="1.8"/><path d="M5 7.2 H13 M5 9.8 H10 M5 12.4 H9" stroke="#444" stroke-width="1.1"/><circle cx="15" cy="13.4" r="5.6" fill="#444"/><path d="M9.6 13.4 H20.4 M15 7.8 C12.4 10.6 12.4 16.2 15 19 C17.6 16.2 17.6 10.6 15 7.8 M10.6 10.6 H19.4 M10.6 16.2 H19.4" fill="none" stroke="#f3f3f3" stroke-width="0.9"/></svg><div class="a" style="left:1704.00px;top:1006.30px;width:9.50px;height:1.20px;background:#444"></div><div class="a" style="left:1720.00px;top:1006.50px;width:124.50px;height:1.00px;background:#777"></div><div class="a" style="left:1781.70px;top:1003.50px;width:1.00px;height:7.00px;background:#777"></div><div class="a" style="left:1739.80px;top:1000.00px;width:5.80px;height:14.00px;background:#666"></div><div class="a" style="left:1851.00px;top:1006.30px;width:9.50px;height:1.20px;background:#444"></div><div class="a" style="left:1855.20px;top:1002.00px;width:1.20px;height:9.60px;background:#444"></div><span class="t" style="left:1877.00px;top:1001.11px;font-size:13.10px;line-height:13.10px;color:#444;letter-spacing:-1.110px;">40%</span></div></body></html>
